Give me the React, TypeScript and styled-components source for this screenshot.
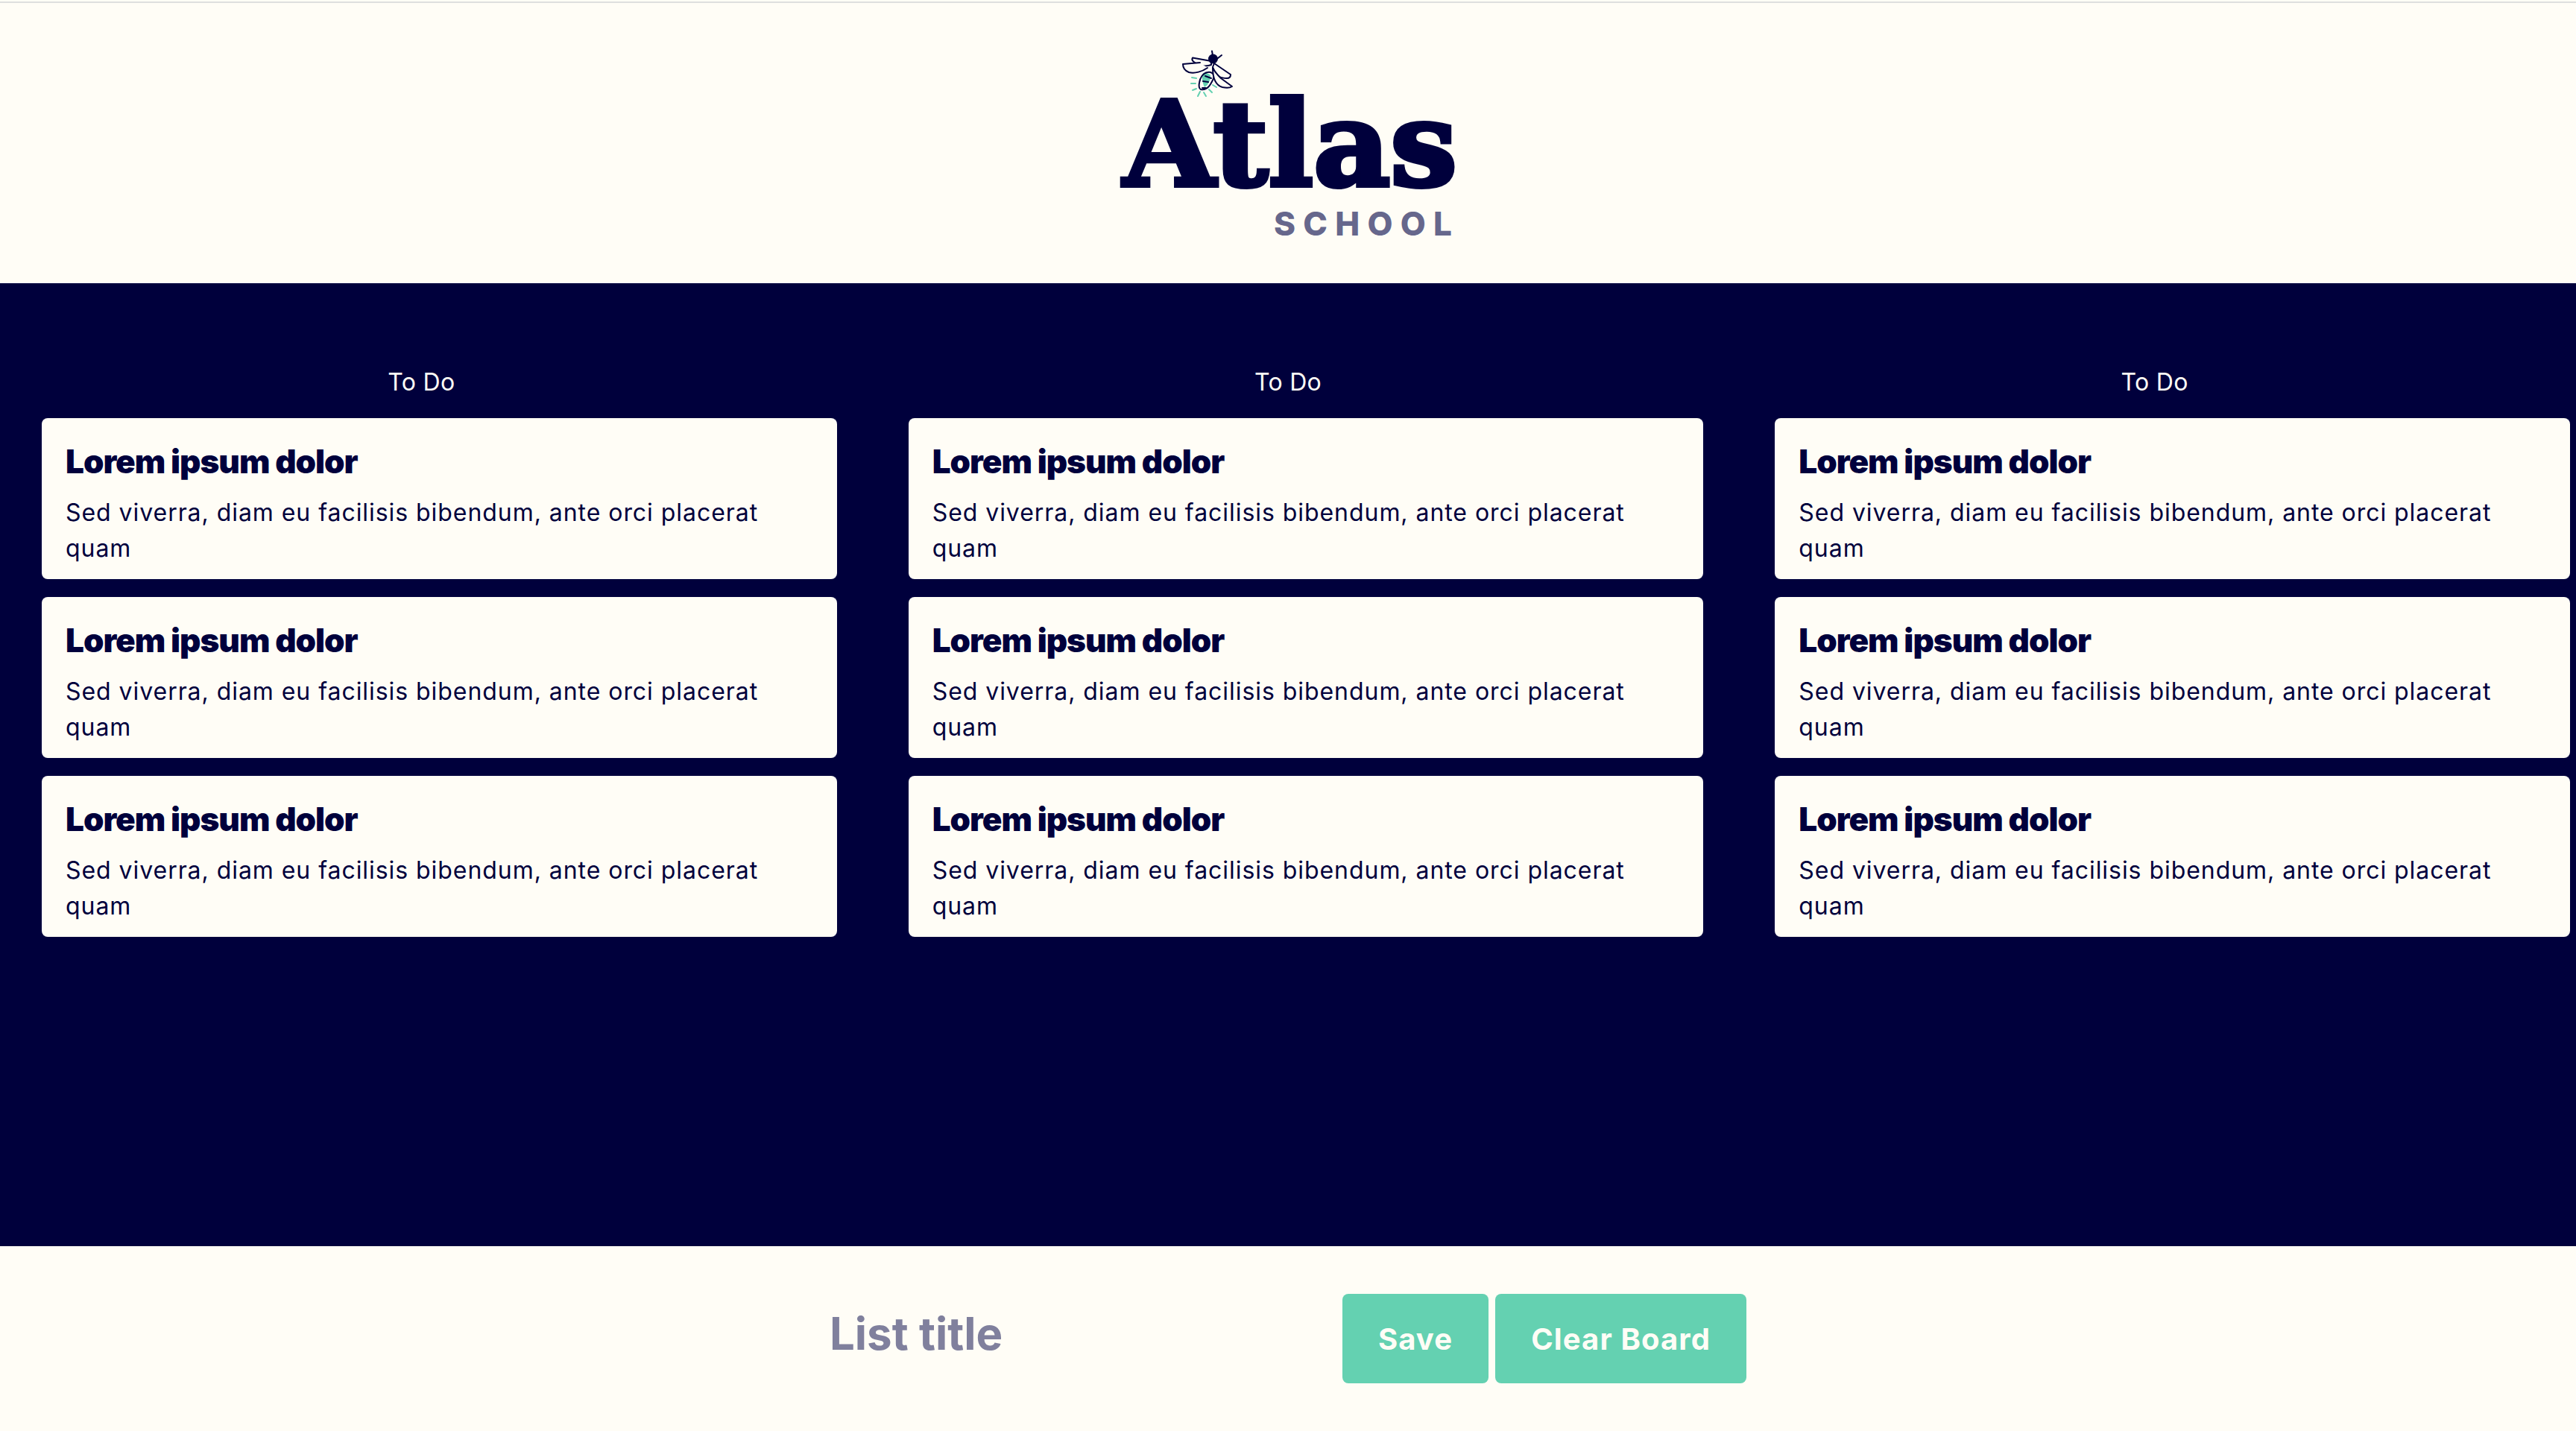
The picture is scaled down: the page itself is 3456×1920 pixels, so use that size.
import React from "react";
import styled, { createGlobalStyle } from "styled-components";

const cream = "#fffdf6";
const navy = "#00003c";
const teal = "#64d1b1";
const bodyFont = `"Inter", "Noto Sans", sans-serif`;

const Global = createGlobalStyle`
  html, body { margin: 0; padding: 0; background: ${cream}; }
  * { box-sizing: border-box; }
  body { font-family: ${bodyFont}; color: ${navy}; }
`;

const Page = styled.div`
  display: flex;
  flex-direction: column;
  height: 1920px;
`;

const Header = styled.header`
  height: 380px;
  display: flex;
  flex-direction: column;
  align-items: center;
  &::before {
    content: "";
    align-self: stretch;
    height: 2px;
    margin-top: 2px;
    background: #dedfde;
  }
`;

const LogoArt = styled.svg`
  width: 480px;
  height: 340px;
  margin-top: 32px;
  overflow: visible;
`;

const Board = styled.main`
  height: 1292px;
  background: ${navy};
  padding-top: 109px;
  display: grid;
  grid-template-columns: repeat(3, 1fr);
  column-gap: 32px;
  align-content: start;
`;

const Column = styled.section`
  display: flex;
  flex-direction: column;
`;

const ColumnTitle = styled.h3`
  margin: 0;
  font-size: 32px;
  line-height: 48px;
  font-weight: 400;
  letter-spacing: 0.3px;
  text-align: center;
  color: ${cream};
`;

const CardList = styled.div`
  display: flex;
  flex-direction: column;
  gap: 24px;
  margin-top: 24px;
  padding: 0 8px 0 56px;
`;

const Card = styled.article`
  height: 216px;
  background: ${cream};
  border-radius: 8px;
  padding: 28px 32px 0;
`;

const CardTitle = styled.h4`
  margin: 0 0 15px;
  font-size: 44px;
  line-height: 60px;
  font-weight: 900;
  letter-spacing: -1px;
  color: ${navy};
`;

const CardText = styled.p`
  margin: 0;
  font-size: 32px;
  line-height: 48px;
  font-weight: 400;
  letter-spacing: 0.95px;
  color: ${navy};
`;

const Footer = styled.footer`
  flex: 1;
  display: flex;
  justify-content: center;
  align-items: flex-start;
  padding-top: 64px;
`;

const TitleInput = styled.input`
  width: 688px;
  height: 120px;
  padding: 0 0 14px;
  border: none;
  outline: none;
  background: transparent;
  font-family: ${bodyFont};
  font-size: 60px;
  font-weight: 700;
  color: ${navy};
  &::placeholder {
    color: #80809d;
    opacity: 1;
  }
`;

const Button = styled.button`
  height: 120px;
  padding: 0 48px;
  margin-right: 9px;
  border: none;
  border-radius: 8px;
  background: ${teal};
  color: ${cream};
  font-family: ${bodyFont};
  font-size: 40px;
  font-weight: 700;
  letter-spacing: 1.1px;
  &:last-child {
    margin-right: 0;
  }
`;

const Logo = () => (
  <LogoArt viewBox="0 0 480 340" aria-label="Atlas School">
    <g transform="translate(82 19)" fill="none" stroke={navy} strokeWidth="2" strokeLinejoin="round" strokeLinecap="round">
      <g stroke={teal}>
        <path d="M29 49l6 1M28 57h6M30 66l5-2M37 74l3-6M48 74l-3-5M56 69l-4-4M62 62l-5-3" />
      </g>
      <path d="M44 43c4-1 8 1 10 3 0 7-3 13-8 16-3-6-4-13-2-19z" fill={teal} stroke="none" />
      <path d="M50 42c-6 1-10 7-11 14-1 5 0 8 2 9 5 1 10-2 13-7 3-5 5-10 5-12-2-3-5-5-9-4z" />
      <path d="M47 47l8 3M44 54l7 1M43 63l5 0" />
      <path d="M55 27L30 22.500c-2 3.500 1 5.500 6 8.500 6 3 14 3 19 1z" fill={cream} />
      <path d="M40 29L17 31c0 5 3 9 8 11 8 2 18-1 25-6" fill={cream} />
      <path d="M59 30l22 15c0 3-2 5-5 5-7 0-14-1-19-15z" fill={cream} />
      <path d="M57 36c3 6 7 10 11 14l15 11c-3 2-8 2-13 1-7-2-13-9-13-26z" fill={cream} />
      <circle cx="57.5" cy="24" r="6.5" fill={navy} stroke="none" />
      <path d="M56 13.500l1 6M69 19l-5 4" />
    </g>
    <text x="19" y="213" fontFamily="'DejaVu Serif', serif" fontWeight="700" fontSize="158" fill={navy} stroke={navy} strokeWidth="6" textLength="448" lengthAdjust="spacingAndGlyphs">
      Atlas
    </text>
    <text x="221" y="280" fontFamily="Inter, sans-serif" fontWeight="800" fontSize="44" letterSpacing="7" fill="#66678c" textLength="246">
      SCHOOL
    </text>
  </LogoArt>
);

const cards = [0, 1, 2];
const columns = [0, 1, 2];

export default function App() {
  return (
    <Page>
      <Global />
      <Header>
        <Logo />
      </Header>
      <Board>
        {columns.map((c) => (
          <Column key={c}>
            <ColumnTitle>To Do</ColumnTitle>
            <CardList>
              {cards.map((i) => (
                <Card key={i}>
                  <CardTitle>Lorem ipsum dolor</CardTitle>
                  <CardText>Sed viverra, diam eu facilisis bibendum, ante orci placerat quam</CardText>
                </Card>
              ))}
            </CardList>
          </Column>
        ))}
      </Board>
      <Footer>
        <TitleInput placeholder="List title" />
        <Button>Save</Button>
        <Button>Clear Board</Button>
      </Footer>
    </Page>
  );
}
